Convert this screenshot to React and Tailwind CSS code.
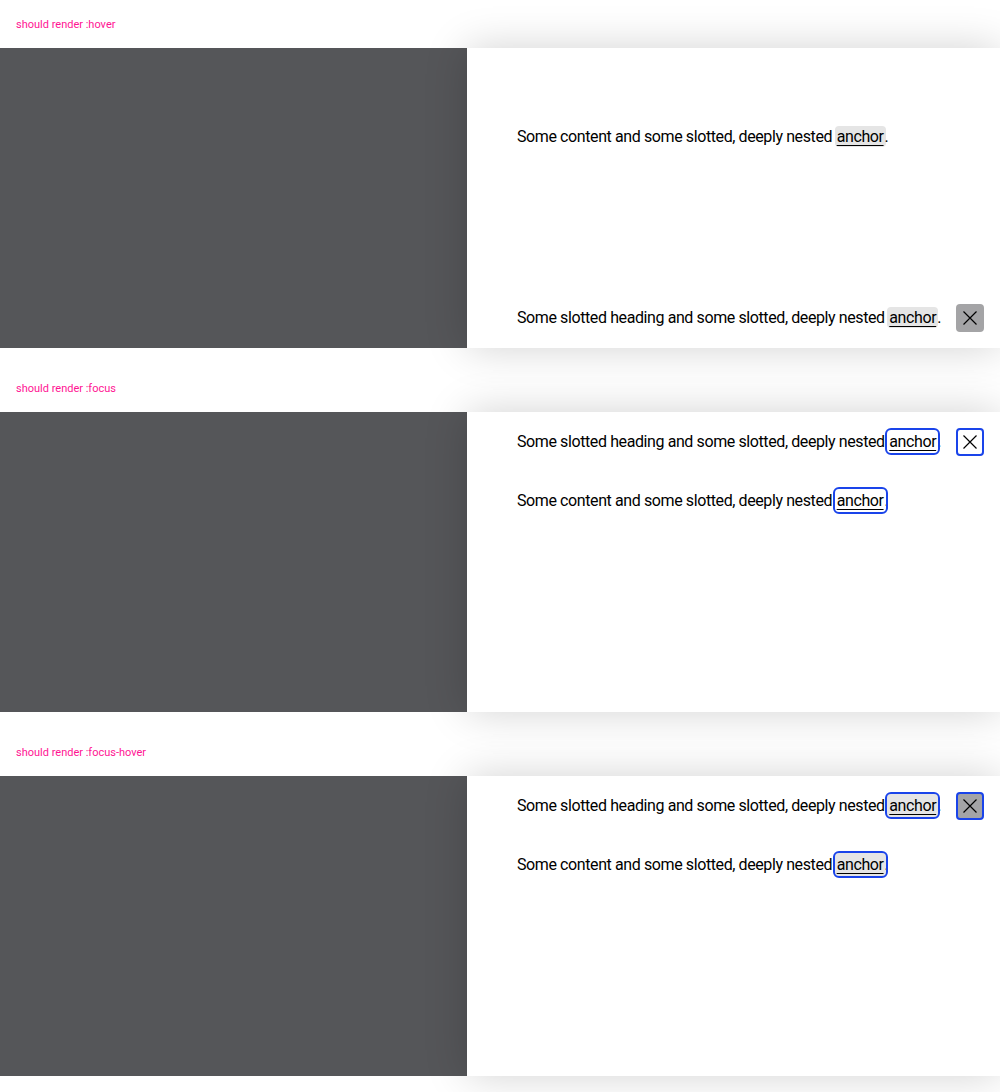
const font = { fontFamily: "Roboto, 'Liberation Sans', sans-serif" };

const CloseIcon = () => (
  <svg width="20" height="20" viewBox="0 0 20 20" fill="none" stroke="currentColor" strokeWidth="1.2">
    <path d="M3.5 3.5 L16.5 16.5 M16.5 3.5 L3.5 16.5" />
  </svg>
);

const Anchor = ({ state }) => {
  const cls =
    state === "hover"
      ? "bg-[#e5e5e5] py-px"
      : state === "focus"
      ? "outline-2 outline-[#1a44ea] outline-offset-0 py-0.5"
      : "bg-[#e5e5e5] outline-2 outline-[#1a44ea] outline-offset-0 py-0.5";
  return (
    <span className={`underline underline-offset-[3px] px-0.5 -mx-px rounded-[4px] ${cls}`}>anchor</span>
  );
};

const CloseButton = ({ state }) => {
  const cls =
    state === "hover"
      ? "bg-[#a4a4a6] border-2 border-transparent"
      : state === "focus"
      ? "bg-white border-2 border-[#1a44ea]"
      : "bg-[#a4a4a6] border-2 border-[#1a44ea]";
  return (
    <div className={`w-7 h-7 rounded-[4px] flex items-center justify-center text-black shrink-0 ${cls}`}>
      <CloseIcon />
    </div>
  );
};

const Heading = ({ state }) => (
  <div className="flex items-center justify-between gap-3 pl-[50px] pr-4">
    <p className="text-base leading-6 tracking-[-0.025em] text-black whitespace-nowrap">
      Some slotted heading and some slotted, deeply nested <Anchor state={state} />.
    </p>
    <CloseButton state={state} />
  </div>
);

const Content = ({ state }) => (
  <p className="pl-[50px] text-base leading-6 tracking-[-0.025em] text-black">
    Some content and some slotted, deeply nested <Anchor state={state} />.
  </p>
);

const Section = ({ label, state }) => (
  <section>
    <div className="h-12 flex items-center px-4 pt-0.5">
      <span className="text-[11px] text-[#ff1493]">{label}</span>
    </div>
    <div className="h-[300px] bg-[#555659] flex justify-end">
      <div className="w-[533px] bg-white shadow-[0_0_40px_rgba(0,0,0,0.18)] flex flex-col">
        {state === "hover" ? (
          <>
            <div className="pt-[77px]">
              <Content state={state} />
            </div>
            <div className="mt-auto pb-4">
              <Heading state={state} />
            </div>
          </>
        ) : (
          <>
            <div className="pt-4">
              <Heading state={state} />
            </div>
            <div className="pt-[33px]">
              <Content state={state} />
            </div>
          </>
        )}
      </div>
    </div>
  </section>
);

export default function App() {
  return (
    <div className="bg-white min-h-[1092px] pb-4 flex flex-col gap-4" style={font}>
      <Section label="should render :hover" state="hover" />
      <Section label="should render :focus" state="focus" />
      <Section label="should render :focus-hover" state="focus-hover" />
    </div>
  );
}
